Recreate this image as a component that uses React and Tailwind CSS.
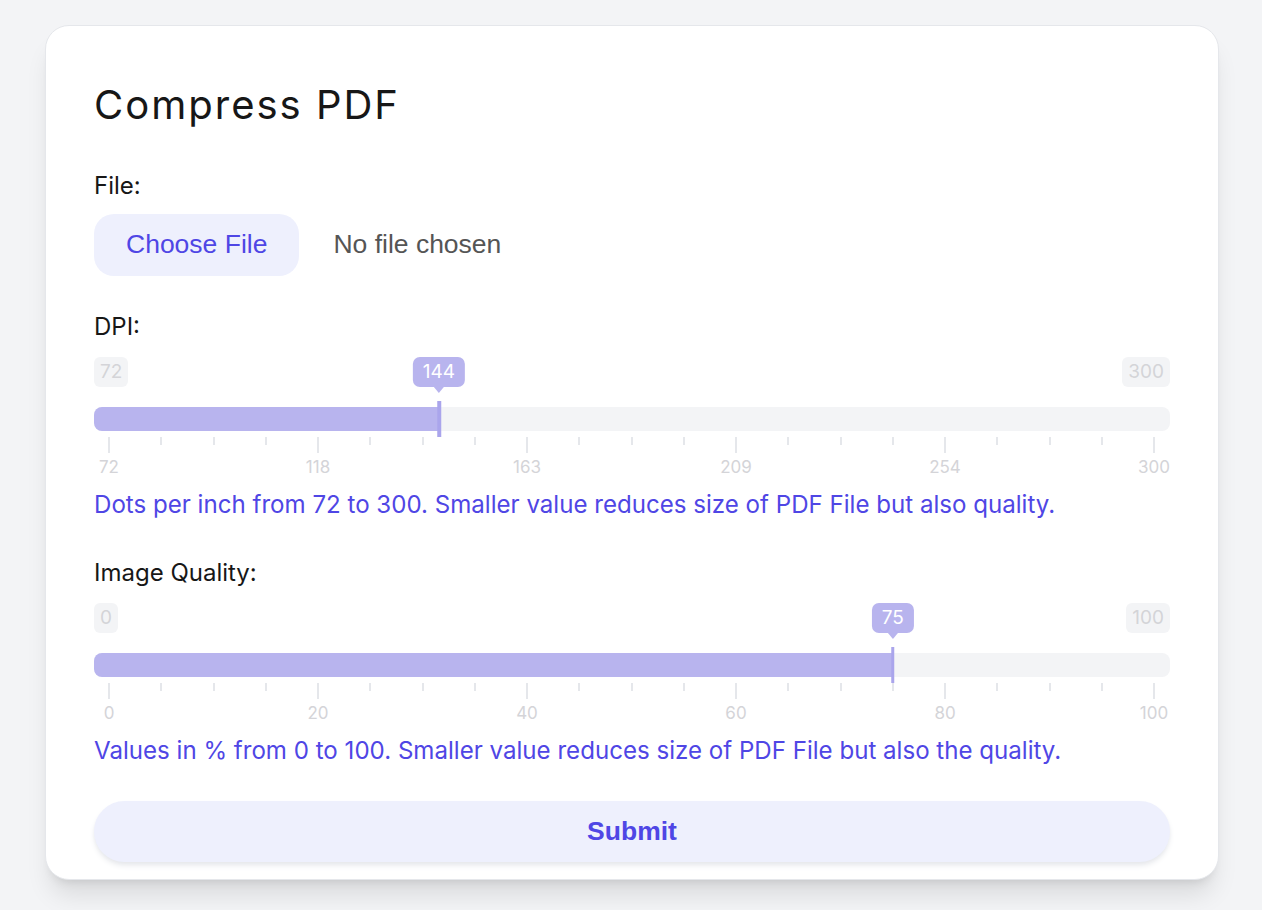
import { useState } from "react";

const sliders = [
  {
    label: "DPI:",
    min: 72,
    max: 300,
    value: 144,
    marks: [72, 118, 163, 209, 254, 300],
    help: "Dots per inch from 72 to 300. Smaller value reduces size of PDF File but also quality.",
  },
  {
    label: "Image Quality:",
    min: 0,
    max: 100,
    value: 75,
    marks: [0, 20, 40, 60, 80, 100],
    help: "Values in % from 0 to 100. Smaller value reduces size of PDF File but also the quality.",
  },
];

const Badge = ({ children }) => (
  <span className="rounded-[6px] bg-[#f3f4f6] px-[6px] text-[19px] leading-[30px] text-[#d4d4d8]">
    {children}
  </span>
);

const Slider = ({ label, min, max, value, marks, help }) => {
  const pct = ((value - min) / (max - min)) * 100;
  const ticks = Array.from({ length: 21 }, (_, i) => i);

  return (
    <div className="flex flex-col">
      <div className="text-[24px] leading-[32px] text-[#171717]">{label}</div>

      {/* min / max badges, value bubble floats above the thumb */}
      <div className="relative mt-[14px] flex h-[30px] justify-between">
        <Badge>{min}</Badge>
        <Badge>{max}</Badge>
        <div className="absolute inset-y-0 left-[15px] right-[16px]">
          <div
            className="absolute top-0 -translate-x-1/2 rounded-[7px] bg-[#b8b4ee] px-[10px] text-[19px] leading-[30px] text-white"
            style={{ left: `${pct}%` }}
          >
            {value}
            <span className="absolute left-1/2 top-full -translate-x-1/2 border-x-[5px] border-t-[6px] border-x-transparent border-t-[#b8b4ee]" />
          </div>
        </div>
      </div>

      {/* track */}
      <div className="relative mt-[20px] h-[24px] rounded-[8px] bg-[#f3f4f6]">
        <div className="absolute inset-y-0 left-[15px] right-[16px]">
          <div
            className="absolute inset-y-0 -left-[15px] rounded-l-[8px] bg-[#b8b4ee]"
            style={{ width: `calc(${pct}% + 15px)` }}
          />
          <div
            className="absolute -top-[6px] h-[36px] w-[3.5px] -translate-x-1/2 bg-[#aaa5ec]"
            style={{ left: `${pct}%` }}
          />
        </div>
      </div>

      {/* ticks */}
      <div className="ml-[14px] mr-[15px] mt-[6px] flex h-[16px] items-start justify-between">
        {ticks.map((i) => (
          <span
            key={i}
            className={i % 4 === 0 ? "h-[16px] w-[2px] bg-[#e5e7eb]" : "h-[8px] w-[2px] bg-[#e5e7eb]"}
          />
        ))}
      </div>
      <div className="ml-[14px] mr-[15px] mt-[2px] flex h-[24px] justify-between">
        {marks.map((m) => (
          <span key={m} className="flex w-[2px] justify-center">
            <span className="text-[17px] leading-[24px] text-[#d4d4d8]">{m}</span>
          </span>
        ))}
      </div>

      <p className="mt-[10px] text-[24.1px] leading-[32px] text-[#4f46e5]">{help}</p>
    </div>
  );
};

export default function App() {
  const [fileName] = useState(null);

  return (
    <div className="min-h-screen bg-[#f3f4f6] pb-[25px] pt-[25px] font-['Inter',sans-serif]">
      <div className="ml-[45px] flex w-[1174px] flex-col rounded-[24px] border border-[#e5e7eb] bg-white px-[48px] pb-[17px] pt-[55px] shadow-xl">
        <h1 className="text-[40px] font-normal leading-[48px] tracking-wider text-[#171717]">
          Compress PDF
        </h1>

        <div className="mt-[41px] text-[24px] leading-[32px] text-[#171717]">File:</div>
        <div className="mt-[12px] flex items-center gap-[34px] font-['Liberation_Sans',Arial,sans-serif] text-[26.5px]">
          <button className="h-[62px] rounded-[20px] bg-[#eef0fd] px-[32px] text-[#4f46e5]">
            Choose File
          </button>
          <span className="text-[#555555]">{fileName || "No file chosen"}</span>
        </div>

        <div className="mt-[35px] flex flex-col gap-[36px]">
          {sliders.map((s) => (
            <Slider key={s.label} {...s} />
          ))}
        </div>

        <button className="mt-[34px] h-[61px] w-full rounded-full bg-[#eef0fd] font-['Liberation_Sans',Arial,sans-serif] text-[26.5px] font-bold text-[#4f46e5] shadow-md shadow-gray-200">
          Submit
        </button>
      </div>
    </div>
  );
}
